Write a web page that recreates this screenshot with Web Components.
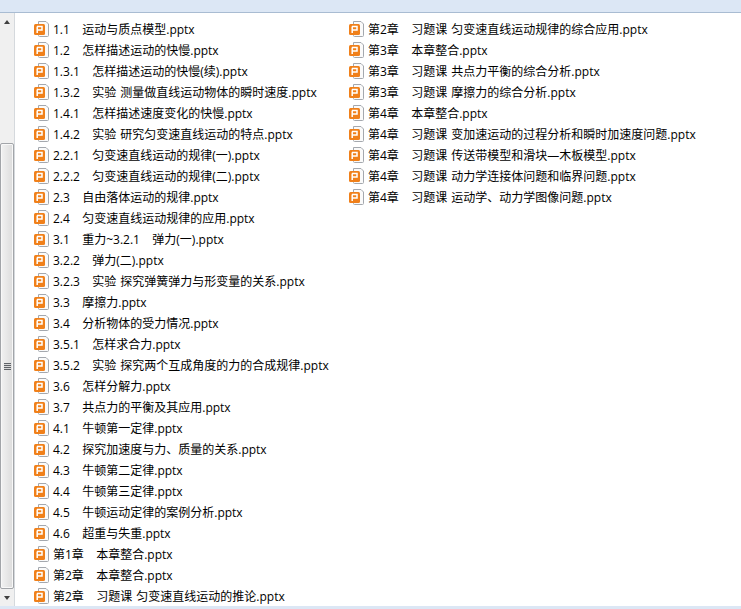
<!DOCTYPE html>
<html>
<head>
<meta charset="utf-8">
<style>
html, body { margin: 0; height: 100%; overflow: hidden; background: #fff; }
</style>
</head>
<body>
<explorer-window></explorer-window>
<script>
const leftFiles = [
  '1.1   运动与质点模型.pptx', '1.2   怎样描述运动的快慢.pptx', '1.3.1   怎样描述运动的快慢(续).pptx',
  '1.3.2   实验 测量做直线运动物体的瞬时速度.pptx', '1.4.1   怎样描述速度变化的快慢.pptx',
  '1.4.2   实验 研究匀变速直线运动的特点.pptx', '2.2.1   匀变速直线运动的规律(一).pptx',
  '2.2.2   匀变速直线运动的规律(二).pptx', '2.3   自由落体运动的规律.pptx', '2.4   匀变速直线运动规律的应用.pptx',
  '3.1   重力~3.2.1   弹力(一).pptx', '3.2.2   弹力(二).pptx', '3.2.3   实验 探究弹簧弹力与形变量的关系.pptx',
  '3.3   摩擦力.pptx', '3.4   分析物体的受力情况.pptx', '3.5.1   怎样求合力.pptx',
  '3.5.2   实验 探究两个互成角度的力的合成规律.pptx', '3.6   怎样分解力.pptx', '3.7   共点力的平衡及其应用.pptx',
  '4.1   牛顿第一定律.pptx', '4.2   探究加速度与力、质量的关系.pptx', '4.3   牛顿第二定律.pptx',
  '4.4   牛顿第三定律.pptx', '4.5   牛顿运动定律的案例分析.pptx', '4.6   超重与失重.pptx',
  '第1章   本章整合.pptx', '第2章   本章整合.pptx', '第2章   习题课 匀变速直线运动的推论.pptx'
]
const rightFiles = [
  '第2章   习题课 匀变速直线运动规律的综合应用.pptx', '第3章   本章整合.pptx', '第3章   习题课 共点力平衡的综合分析.pptx',
  '第3章   习题课 摩擦力的综合分析.pptx', '第4章   本章整合.pptx', '第4章   习题课 变加速运动的过程分析和瞬时加速度问题.pptx',
  '第4章   习题课 传送带模型和滑块—木板模型.pptx', '第4章   习题课 动力学连接体问题和临界问题.pptx',
  '第4章   习题课 运动学、动力学图像问题.pptx'
]

customElements.define('file-row',
  class extends HTMLElement {
    constructor () {
      super()
      this.attachShadow({ mode: 'open' }).innerHTML = `
        <style>
          :host { display: flex; align-items: center; height: 21.04px; white-space: pre; }
          svg { flex: none; width: 16px; height: 16px; margin-right: 3px; }
        </style>
        <svg viewBox="0 0 16 16">
          <path d="M4.5 .5H12L14.5 3V14.5Q14.5 15.5 13.5 15.5H5.5Q4.5 15.5 4.5 14.5Z" fill="#fafafa" stroke="#a4a8ae"/>
          <rect x="0" y="3" width="11" height="11" rx="1.5" fill="#f0801a"/>
          <path d="M3 5.5H8V9H3.8M3.2 5.5V12" fill="none" stroke="#fff" stroke-width="1.5"/>
        </svg>
        <slot></slot>`
    }
  })

customElements.define('file-list',
  class extends HTMLElement {
    constructor () {
      super()
      this.attachShadow({ mode: 'open' }).innerHTML = `
        <style>
          :host { display: block; width: 315px; flex: none; }
        </style>
        <slot></slot>`
    }

    set files (names) {
      for (const name of names) {
        const row = document.createElement('file-row')
        row.textContent = name
        this.appendChild(row)
      }
    }
  })

customElements.define('side-scrollbar',
  class extends HTMLElement {
    constructor () {
      super()
      this.attachShadow({ mode: 'open' }).innerHTML = `
        <style>
          :host { display: flex; flex-direction: column; width: 14px; flex: none; background: #f0f0f0; border-right: 1px solid #d5d9dd; box-sizing: content-box; }
          .arrow { height: 17px; display: flex; align-items: center; justify-content: center; flex: none; }
          .arrow i { width: 0; height: 0; border-left: 3.5px solid transparent; border-right: 3.5px solid transparent; }
          .up i { border-bottom: 4px solid #404040; }
          .down i { border-top: 4px solid #404040; }
          .track { flex: 1; display: flex; flex-direction: column; }
          .space { height: 113px; flex: none; }
          .thumb { flex: 1; border: 1px solid #a2a5a9; border-radius: 2px; background: linear-gradient(to right, #f2f2f2, #dcdcdc); display: flex; align-items: center; justify-content: center; box-shadow: inset 0 0 0 1px #f8f8f8; }
          .grip { width: 7px; height: 7px; background: repeating-linear-gradient(to bottom, #5f6368 0 1px, #d8d8d8 1px 2px); }
        </style>
        <div class="arrow up"><i></i></div>
        <div class="track">
          <div class="space"></div>
          <div class="thumb"><div class="grip"></div></div>
        </div>
        <div class="arrow down"><i></i></div>`
    }
  })

customElements.define('explorer-window',
  class extends HTMLElement {
    constructor () {
      super()
      this.attachShadow({ mode: 'open' }).innerHTML = `
        <style>
          :host { display: flex; flex-direction: column; width: 741px; height: 609px; font: 12px "Open Sans", "Noto Sans CJK SC", sans-serif; word-spacing: 1px; color: #000; background: #fff; }
          .top { height: 12px; flex: none; background: #dce7f5; border-bottom: 1px solid #a9bcd2; }
          .body { flex: 1; display: flex; min-height: 0; }
          .content { flex: 1; display: flex; padding: 5px 0 0 19px; overflow: hidden; }
          .bottom { height: 3px; flex: none; background: #dce7f5; }
        </style>
        <div class="top"></div>
        <div class="body">
          <side-scrollbar></side-scrollbar>
          <div class="content">
            <file-list id="left"></file-list>
            <file-list id="right"></file-list>
          </div>
        </div>
        <div class="bottom"></div>`
      this.shadowRoot.querySelector('#left').files = leftFiles
      this.shadowRoot.querySelector('#right').files = rightFiles
    }
  })
</script>
</body>
</html>
